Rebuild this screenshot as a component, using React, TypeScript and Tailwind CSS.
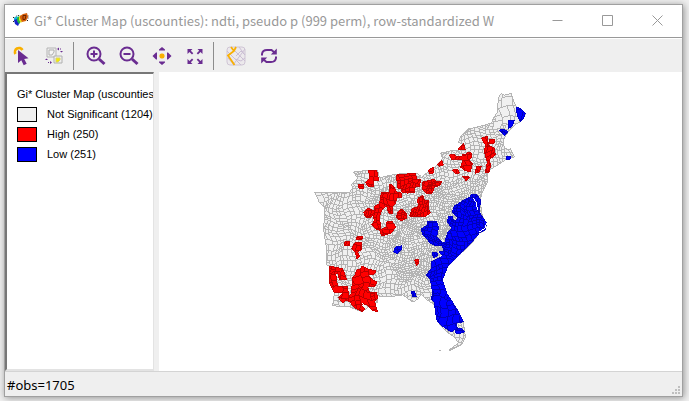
import React from "react";

type Box = { x: number; y: number; w: number; h: number };

/* Small deterministic generator so the county mesh is the same on every render. */
function makeRandom(seed: number) {
  let s = seed;
  return () => {
    s = (s * 1664525 + 1013904223) % 4294967296;
    return s / 4294967296;
  };
}

/* Typical county width, by region. */
function cellSize(x: number, y: number) {
  if (y < 124 && x > 495) return 7;
  if (y < 180) return 3.8;
  if (x > 428 && y > 285) return 4.4;
  if (x > 395 && y < 280) return 2.5;
  if (x > 365 && y < 250) return 3.1;
  return 4.1;
}

/* Bends the straight survey lines into irregular county borders. */
function warp(x: number, y: number): string {
  const wx = x + 1.6 * Math.sin(y / 3.7 + x / 19) + 1.8 * Math.sin(y / 11 + x / 7);
  const wy = y + 1.6 * Math.sin(x / 4.1 + y / 17) + 1.8 * Math.sin(x / 12 - y / 8);
  return `${wx.toFixed(1)} ${wy.toFixed(1)}`;
}

function border(x1: number, y1: number, x2: number, y2: number): string {
  const steps = Math.max(1, Math.round(Math.hypot(x2 - x1, y2 - y1) / 3));
  let d = `M${warp(x1, y1)}L`;
  for (let i = 1; i <= steps; i++) {
    d += `${warp(x1 + ((x2 - x1) * i) / steps, y1 + ((y2 - y1) * i) / steps)} `;
  }
  return d;
}

function buildCountyMesh(scale: number): string {
  const random = makeRandom(77);
  const parts: string[] = [];
  const split = (b: Box) => {
    const limit = scale * cellSize(b.x + b.w / 2, b.y + b.h / 2) * (1.1 + random() * 0.6);
    if (b.w <= limit && b.h <= limit) return;
    const share = 0.36 + random() * 0.28;
    if (b.w > b.h) {
      const cut = b.w * share;
      parts.push(border(b.x + cut, b.y, b.x + cut, b.y + b.h));
      split({ x: b.x, y: b.y, w: cut, h: b.h });
      split({ x: b.x + cut, y: b.y, w: b.w - cut, h: b.h });
    } else {
      const cut = b.h * share;
      parts.push(border(b.x, b.y + cut, b.x + b.w, b.y + cut));
      split({ x: b.x, y: b.y, w: b.w, h: cut });
      split({ x: b.x, y: b.y + cut, w: b.w, h: b.h - cut });
    }
  };
  split({ x: 306, y: 84, w: 230, h: 276 });
  return parts.join("");
}

const mesh = buildCountyMesh(1);
const openMesh = buildCountyMesh(1.6);

const land =
  "M315 192H350L353 188 352 184 358 178 354 172 370 170 378 170 380 178 387 176 398 174 416 173 422 177 432 169 441 163 443 158 441 153 450 151 458 150 465 145 459 142 462 135 468 129 477 127 492 123 494 118 498 112 499 98 502 93 505 95 512 93 515 103 518 108 526 114 522 121 515 125 508 133 504 140 505 148 510 150 511 148 515 157 508 158 503 162 493 168 488 171 488 182 483 192 481 199 482 212 487 226 485 231 480 233 472 244 462 253 448 267 443 280 447 293 458 310 464 323 466 337 462 345 450 351 450 350 459 343 455 337 448 333 438 322 435 305 429 301 422 295 419 298 413 302 403 295 390 297 378 296 377 303 372 305 362 312 350 307 333 306 334 297 336 291 330 282 330 266 327 265 327 250 324 230 325 208 320 203Z";

const high =
  "M369 170H377L379 180 374 181 374 186H368L366 182 370 178ZM359 184H364V188H359Z" +
  "M382 192H390V184H392L395 188 397 192 402 193 402 197 397 198 396 203 393 207 393 213H389L387 205 382 210 380 216 381 230H377L372 225 375 220 373 215 371 218 366 217 364 212 368 208 375 211 375 206 380 204Z" +
  "M380 230 387 227 387 222 393 222 396 227 392 233 382 236ZM398 212 402 209 407 213 407 218 402 221 397 218Z" +
  "M397 175 416 173 417 179 421 180 420 186 415 187 415 192 408 193 402 192 402 188 398 188Z" +
  "M423 182 435 179 436 181 442 181 441 185 435 187 433 193H427L423 189ZM418 200 419 197 423 195 425 200H429V209L431 213 425 217 410 216 413 208 419 206Z" +
  "M429 170 434 167V173H430ZM438 164 442 160 444 165 440 166ZM459 149 464 143 466 150Z" +
  "M450 155 455 154 457 157 463 156 463 154 467 155 468 152 472 153V158L469 160 473 163 471 172 465 170 461 167 464 160 452 159Z" +
  "M453 170 458 169 460 173 456 173ZM463 176 470 177 467 181ZM476 173 477 166 482 166 480 172Z" +
  "M482 138 488 136 489 145 495 148 496 155 490 159 491 165 490 172H486L488 162 485 152 486 145ZM490 139H495V143H490Z" +
  "M357 237H363V239L357 240ZM345 242H350V246H345ZM355 243H362V250L358 252 360 257 357 259 356 252 352 249Z" +
  "M330 266 343 269 345 274 347 280H340L338 273 336 274 338 287 348 287 349 298 343 303 339 298 343 293 335 293 330 283Z" +
  "M357 270 361 270 362 266 368 269 376 271 375 274 368 275 372 279 377 282 376 286 368 287 370 293 377 293 378 298 375 302 377 309 378 312 372 310 367 305 361 304 365 309 363 312 355 308 350 302 346 300 348 298 352 294 352 288 353 282 353 277 355 276Z" +
  "M415 260 419 259 419 264 417 266 416 262Z";

const low =
  "M517 107 521 108 526 113 524 119 521 121 518 116ZM509 120H515L513 126 509 128ZM500 130 505 129 509 132 505 135ZM507 156H511V159H507Z" +
  "M453 212 455 206 463 201 471 197 472 194 477 194 481 200 480 212 487 223 486 230 480 233 470 245 462 253 448 267 443 280 447 293 458 310 464 322 457 323 457 329 452 332 445 328 438 322 436 313 435 303 432 300 433 292 431 280 427 275 432 268 432 262 438 259 443 256 440 252 445 252 443 246 437 246 430 243 428 239 423 235 422 229 428 225 428 221 437 221 439 228 437 237 443 242 445 244 448 233 452 228 448 222 449 217 453 216 454 221 459 219Z" +
  "M433 253H438V256L434 258ZM457 328 463 329 465 332 460 334 456 333ZM396 247 402 246 402 250 398 254 394 252ZM412 291 415 292 417 297 413 297Z";

function ClusterMap() {
  return (
    <svg
      viewBox="159 72 524 299"
      className="h-full w-full"
      role="img"
      aria-label="Gi* cluster map of counties"
    >
      <defs>
        <clipPath id="land"><path d={land} /></clipPath>
        <clipPath id="high"><path d={high} /></clipPath>
        <clipPath id="low"><path d={low} /></clipPath>
      </defs>
      <g shapeRendering="crispEdges" fill="none">
        <g clipPath="url(#land)">
          <path d={land} fill="#f0f0f0" />
          <path d={mesh} stroke="#b4b4b4" />
        </g>
        <path d={land} stroke="#b4b4b4" />
        <g clipPath="url(#high)">
          <path d={high} fill="#ff0000" />
          <path d={openMesh} stroke="#b90000" />
        </g>
        <path d={high} stroke="#c80000" />
        <g clipPath="url(#low)">
          <path d={low} fill="#0000ff" />
          <path d={openMesh} stroke="#0000b9" />
        </g>
        <path d={low} stroke="#0000c8" />
        <path d="M474 198 477 203 478 210M480 232 486 228 487 223M362 303 367 308" stroke="#ffffff" />
        <path d="M378 300V303M440 351H442M450 350 458 347 464 343M510 151 514 157" stroke="#b4b4b4" />
      </g>
    </svg>
  );
}

const purple = "#6a2c91";
const amber = "#f9b000";

function Icon({ children }: { children: React.ReactNode }) {
  return (
    <svg viewBox="0 0 20 20" className="size-5" fill="none" aria-hidden="true">
      {children}
    </svg>
  );
}

function AppIcon() {
  return (
    <svg viewBox="0 0 16 16" className="size-4" aria-hidden="true">
      <path d="M0 4.500h2l2-2h3M0 8.500h2M13 2.500h2v3M14 7.500h2" fill="none" stroke="#222" strokeDasharray="1 1" />
      <path d="M1 5l3-2 2 3-2 4-3-2z" fill="#12b5d8" />
      <path d="M1 7l3-1 3 3-2 4-3-2z" fill="#1722c9" />
      <path d="M4 5l2-2 3 4-3 4-2-3z" fill="#23b541" />
      <path d="M6 4l2-2 2 5-2 3-2-3z" fill="#e9d91b" />
      <path d="M7 3l3-2 4-1 1 4-2 4-4 1-2-4z" fill="#d8600b" />
      <path d="M10 2.500h3l-1 4h-2z" fill="none" stroke="#6a2400" />
    </svg>
  );
}

const PointerIcon = () => (
  <Icon>
    <path d="M3.500 8A4 4 0 1 1 10.500 4" stroke={amber} strokeWidth="2.600" />
    <path d="M6 4v13l3.300-2.800 2.400 5 3-1.500-2.500-4.700 4.300-.7z" fill={purple} />
  </Icon>
);

const InvertIcon = () => (
  <Icon>
    <path d="M2 2h9v9H2z" fill="#eeeeee" stroke="#b4b4b4" />
    <path d="M4 4h5v2l-2 3H4z" fill="#f5f5f5" stroke="#b0b0b0" />
    <path d="M9 10h8v7H9z" fill="#eeeeee" stroke="#b0b0b0" />
    <path d="M11 12h4v2l-2 2h-2z" fill="#f5ec00" stroke="#d9d26a" />
    <path d="M12 3l2-1.500v3zM15 2.500h1v1h-1zM16.500 6.500l-1.500-1.500h3zM7 16.500l-2-1.500v3zM3 16h1v1H3zM1.500 12.500L3 14H0z" fill={purple} />
  </Icon>
);

const ZoomIcon = ({ plus }: { plus?: boolean }) => (
  <Icon>
    <circle cx="8" cy="8" r="6.500" stroke={purple} strokeWidth="2" />
    <path d="M13 13l5.500 5" stroke={purple} strokeWidth="3" />
    <path d="M4.500 8h7" stroke={purple} strokeWidth="2" />
    {plus && <path d="M8 4.500v7" stroke={purple} strokeWidth="2" />}
  </Icon>
);

const PanIcon = () => (
  <Icon>
    <rect x="7.500" y="7.500" width="5" height="5" rx="2" fill={amber} />
    <path d="M10 1l3 2.500v1H7v-1zM10 19l3-2.500v-1H7v1zM.5 10L4 6.500h1v7H4zM19.500 10L16 6.500h-1v7h1z" fill={purple} />
  </Icon>
);

const ExtentIcon = () => (
  <Icon>
    <path
      d="M2.500 3h5l-1.700 1.700 2.500 2.500-1.300 1.300-2.500-2.500-2 2zM17.500 3h-5l1.700 1.700-2.500 2.500L13 8.500 15.500 6l2 2zM2.500 18h5l-1.700-1.700 2.500-2.500L7 12.500 4.500 15l-2-2zM17.500 18h-5l1.700-1.700-2.500-2.500 1.300-1.300 2.500 2.500 2-2z"
      fill={purple}
    />
  </Icon>
);

const BasemapIcon = () => (
  <Icon>
    <rect x="1" y="1" width="18" height="18" rx="3" fill="#ece9ec" stroke="#cfc5d5" />
    <path d="M1 5l14 14M5 1l14 14M19 3L7 19M13 1l6 8M10 10l5-5 4 4M9 13l6 2 4-3M2 12l6 7" stroke="#cbbfd4" />
    <path d="M10 1L8 5 2 9.500 8.500 19M8 5L5 1" stroke={amber} strokeWidth="1.800" />
  </Icon>
);

const RefreshIcon = () => (
  <Icon>
    <path d="M3 9.500V8q.5-4 5-4h4.500l3 2.500M17 10.500V12q-.5 4-5 4H7.500l-3-2.500" stroke={purple} strokeWidth="2" />
    <path d="M17.800 2.500v6h-6zM2.200 17.500v-6h6z" fill={purple} />
  </Icon>
);

function ToolButton({ label, children }: { label: string; children: React.ReactNode }) {
  return (
    <button type="button" aria-label={label} title={label} className="flex h-8 w-[33px] items-center justify-center">
      {children}
    </button>
  );
}

const Separator = () => <span className="mr-[5px] ml-0.5 h-7 w-px bg-[#8c8c8c]" />;

function CaptionButton({ label, path }: { label: string; path: string }) {
  return (
    <button type="button" aria-label={label} className="flex h-[30px] w-[50px] items-center justify-center">
      <svg viewBox="0 0 11 11" className="size-[11px]" fill="none" stroke="#999999" aria-hidden="true">
        <path d={path} />
      </svg>
    </button>
  );
}

const legend = [
  { label: "Not Significant (1204)", color: "bg-[#f0f0f0]" },
  { label: "High (250)", color: "bg-[#ff0000]" },
  { label: "Low (251)", color: "bg-[#0000ff]" },
];

export default function App() {
  return (
    <div className="h-screen bg-[#f0f0f0] pt-1 pr-1.5 pb-1 pl-1 font-['Noto_Sans',sans-serif]">
      <div className="flex h-full flex-col border border-[#a0a0a0] bg-[#efefef] shadow-[1px_1px_7px_rgba(0,0,0,0.4)]">
        <header className="flex h-[33px] shrink-0 border-b border-[#999999] bg-white">
          <div className="flex min-w-0 flex-1 items-center gap-[5px] pl-2">
            <AppIcon />
            <h1 className="font-['Noto_Sans_CJK_KR',sans-serif] text-[13px] leading-5 whitespace-nowrap text-[#999999]">
              Gi* Cluster Map (uscounties): ndti, pseudo p (999 perm), row-standardized W
            </h1>
          </div>
          <CaptionButton label="Minimize" path="M.5 5.500h10" />
          <CaptionButton label="Maximize" path="M1 .5h9.500v10H.5V.5z" />
          <CaptionButton label="Close" path="M.5.5l10 10M10.500.5l-10 10" />
        </header>

        <div className="flex h-[34px] shrink-0 items-center border-t border-white" role="toolbar" aria-label="Map tools">
          <ToolButton label="Select"><PointerIcon /></ToolButton>
          <ToolButton label="Invert Select"><InvertIcon /></ToolButton>
          <Separator />
          <ToolButton label="Zoom In"><ZoomIcon plus /></ToolButton>
          <ToolButton label="Zoom Out"><ZoomIcon /></ToolButton>
          <ToolButton label="Pan"><PanIcon /></ToolButton>
          <ToolButton label="Full Extent"><ExtentIcon /></ToolButton>
          <Separator />
          <ToolButton label="Base Map"><BasemapIcon /></ToolButton>
          <ToolButton label="Refresh"><RefreshIcon /></ToolButton>
        </div>

        <main className="flex min-h-0 flex-1 gap-[5px]">
          <aside className="w-[149px] shrink-0 overflow-hidden border-2 border-r border-t-[#777777] border-r-[#e3e3e3] border-b-[#e3e3e3] border-l-[#777777] bg-white pt-2.5 pl-2.5 font-['Liberation_Sans',Arial,sans-serif] text-[11px] leading-5 whitespace-nowrap text-black">
            <h2>Gi* Cluster Map (uscounties)</h2>
            <ul>
              {legend.map((item) => (
                <li key={item.label} className="flex h-5 items-center gap-2.5">
                  <span className={`h-[15px] w-5 border border-black ${item.color}`} />
                  {item.label}
                </li>
              ))}
            </ul>
          </aside>
          <section className="min-w-0 flex-1 bg-white">
            <ClusterMap />
          </section>
        </main>

        <footer className="flex h-[25px] shrink-0 items-center justify-between border-t border-[#d4d4d4] pt-0.5 pl-0.5 text-[13px] leading-5 text-black">
          <span>#obs=1705</span>
          <svg viewBox="0 0 8 8" className="mr-0.5 mb-0.5 size-2 self-end" fill="#bfbfbf" aria-hidden="true">
            <path d="M6 0h2v2H6zM3 3h2v2H3zM6 3h2v2H6zM0 6h2v2H0zM3 6h2v2H3zM6 6h2v2H6z" />
          </svg>
        </footer>
      </div>
    </div>
  );
}
